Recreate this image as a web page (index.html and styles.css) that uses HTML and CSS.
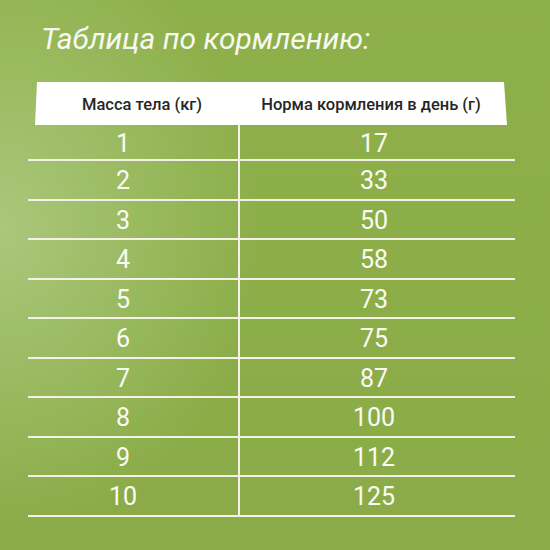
FILE: index.html
```html
<!DOCTYPE html>
<html lang="ru">
<head>
<meta charset="utf-8">
<link rel="stylesheet" href="styles.css">
</head>
<body>
<div class="page">
  <h1 class="title">Таблица по кормлению:</h1>
  <div class="head">
    <div class="hcell hleft">Масса тела (кг)</div>
    <div class="hcell hright">Норма кормления в день (г)</div>
  </div>
  <div class="rows">
    <div class="row first"><div class="c l">1</div><div class="c r">17</div></div>
    <div class="row"><div class="c l">2</div><div class="c r">33</div></div>
    <div class="row"><div class="c l">3</div><div class="c r">50</div></div>
    <div class="row"><div class="c l">4</div><div class="c r">58</div></div>
    <div class="row"><div class="c l">5</div><div class="c r">73</div></div>
    <div class="row"><div class="c l">6</div><div class="c r">75</div></div>
    <div class="row"><div class="c l">7</div><div class="c r">87</div></div>
    <div class="row"><div class="c l">8</div><div class="c r">100</div></div>
    <div class="row"><div class="c l">9</div><div class="c r">112</div></div>
    <div class="row"><div class="c l">10</div><div class="c r">125</div></div>
  </div>
</div>
</body>
</html>
```
FILE: styles.css
```css
* { box-sizing: border-box; }
html, body { margin: 0; padding: 0; }
body {
  width: 550px;
  height: 550px;
  overflow: hidden;
  font-family: Roboto, "Noto Sans", sans-serif;
  background:
    radial-gradient(ellipse 260px 300px at 0px 230px, rgba(180, 208, 140, 0.75), rgba(180, 208, 140, 0) 100%),
    linear-gradient(180deg, #8eb04a 0%, #8aab47 100%);
}
.page {
  padding-top: 21px;
}
.title {
  margin: 0 0 0 41px;
  font-size: 30px;
  line-height: 35px;
  font-weight: 400;
  font-style: italic;
  color: #f8f8f2;
  height: 35px;
}
.head {
  margin: 26px 0 0 35px;
  width: 472px;
  height: 43px;
  background: #ffffff;
  clip-path: polygon(2px 0, 469px 0, 100% 100%, 0 100%);
  display: grid;
  grid-template-columns: 203px 1fr;
  align-items: center;
  color: #262626;
  font-size: 16.5px;
  font-weight: 500;
}
.hcell { text-align: center; line-height: 43px; padding-top: 1px; }
.hleft { padding-left: 11px; }
.hright { padding-right: 3px; }
.rows {
  margin-left: 28px;
  width: 487px;
}
.row {
  display: grid;
  grid-template-columns: 210px 1fr;
  height: 39.5px;
  border-bottom: 2px solid #f3f2e8;
}
.row.first { height: 36px; }
.c {
  color: #fbfbf5;
  font-size: 25px;
  text-align: center;
  display: flex;
  align-items: center;
  justify-content: center;
  padding-top: 2px;
}
.l { padding-right: 20px; }
.r { padding-right: 7px; border-left: 2px solid #f3f2e8; }
```
